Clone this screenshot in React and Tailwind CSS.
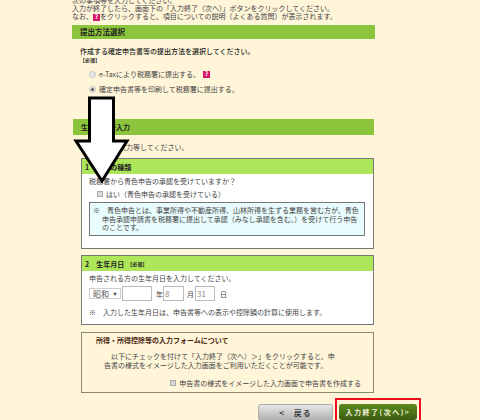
import React from 'react';

const jp = 'font-["Noto_Sans_CJK_JP",sans-serif]';

const Help = () => (
  <span className="inline-flex w-[7px] h-[7px] items-center justify-center bg-[#d6176b] text-white text-[6px] leading-none font-bold align-middle">?</span>
);

const Radio = ({ checked }) => (
  <span className="w-[7px] h-[7px] rounded-full border border-[#c4c4c4] bg-[#e8e8e8] flex items-center justify-center shrink-0">
    {checked && <span className="w-[3px] h-[3px] rounded-full bg-[#555]" />}
  </span>
);

const Check = () => (
  <span className="inline-block w-[6px] h-[6px] border border-[#aaa] bg-[#d8d8d8] shrink-0" />
);

const Box = ({ title, children, className = '' }) => (
  <div className={`w-[293px] ml-[10px] border border-[#777] bg-white ${className}`}>
    <div className="h-[15px] bg-[#aee65a] flex items-center pl-[3px] font-bold text-[#222]">{title}</div>
    {children}
  </div>
);

const Arrow = () => (
  <svg className="absolute left-[72px] top-[94px]" width="60" height="92" viewBox="0 0 60 92">
    <polygon points="17.5,4 41.5,4 41.5,47 55,47 30,87 4,47 17.5,47" fill="white" stroke="black" strokeWidth="3" />
  </svg>
);

export default function App() {
  return (
    <div className={`${jp} relative w-[480px] h-[420px] overflow-hidden bg-[#fff5d9] text-[#444] text-[7px] leading-[8px]`}>
      <div className="w-[305px] ml-[71px]">
        <div className="-mt-[4px] pl-[1px] h-[24px]">
          <p>次の事項等を入力してください。</p>
          <p>入力が終了したら、画面下の「入力終了（次へ）」ボタンをクリックしてください。</p>
          <p>なお、<Help />をクリックすると、項目についての説明（よくある質問）が表示されます。</p>
        </div>
        <div className="mt-[4px] h-[16px] bg-[#8cc43c] border border-[#fdf8dc] flex items-center pl-[8px] text-[7.5px] font-bold text-[#222]">提出方法選択</div>

        <p className="mt-[7px] pl-[9px] text-[#222] font-medium">作成する確定申告書等の提出方法を選択してください。</p>
        <p className="pl-[9px] text-[5px] leading-[9px] font-bold text-[#222]">【必須】</p>

        <div className="mt-[5px] pl-[18px] flex items-center gap-[3px] h-[10px]">
          <Radio />
          <span>e-Taxにより税務署に提出する。</span>
          <Help />
        </div>
        <div className="mt-[5px] pl-[18px] flex items-center gap-[3px] h-[10px]">
          <Radio checked />
          <span>確定申告書等を印刷して税務署に提出する。</span>
        </div>

        <div className="mt-[25px] ml-[2px] w-[301px] h-[16px] bg-[#8cc43c] flex items-center pl-[8px] font-bold text-[#222]">生年月日等入力</div>
        <p className="mt-[8px] pl-[13px]">次の項目を入力等してください。</p>

        <Box title="1　申告の種類" className="mt-[7px] h-[91px]">
          <p className="mt-[3px] pl-[7px]">税務署から青色申告の承認を受けていますか？</p>
          <div className="mt-[5px] pl-[15px] flex items-center gap-[3px]">
            <Check />
            <span>はい（青色申告の承認を受けている）</span>
          </div>
          <div className="mt-[4px] ml-[7px] w-[276px] h-[34px] border border-[#777] bg-[#e9fcfd] pl-[12px] pr-[4px] pt-[3px] leading-[8.5px]">
            <p className="-ml-[9px]">※　青色申告とは、事業所得や不動産所得、山林所得を生ずる業務を営む方が、青色</p>
            <p>申告承認申請書を税務署に提出して承認（みなし承認を含む。）を受けて行う申告</p>
            <p>のことです。</p>
          </div>
        </Box>

        <Box
          title={<>2　生年月日 <span className="ml-[3px] text-[5px]">【必須】</span></>}
          className="mt-[6px] h-[70px]"
        >
          <p className="mt-[3px] pl-[7px]">申告される方の生年月日を入力してください。</p>
          <div className="mt-[4px] pl-[7px] flex items-center h-[15px]">
            <span className="w-[32px] h-[11px] border border-[#ccc] bg-white flex items-center justify-between pl-[3px] pr-[3px] text-[8px] text-[#555]">
              昭和<span className="text-[4px]">▼</span>
            </span>
            <span className="ml-[1px] w-[30px] h-[15px] border border-[#bbb] bg-white" />
            <span className="ml-[4px] w-[7px]">年</span>
            <span className="w-[21px] h-[15px] border border-[#bbb] bg-white flex items-center pl-[1px] text-[#888] text-[8px]">8</span>
            <span className="ml-[3px] w-[8px]">月</span>
            <span className="w-[20px] h-[15px] border border-[#bbb] bg-white flex items-center pl-[1px] text-[#888] text-[8px]">31</span>
            <span className="ml-[5px]">日</span>
          </div>
          <p className="mt-[7px] pl-[7px]">※　入力した生年月日は、申告書等への表示や控除額の計算に使用します。</p>
        </Box>

        <div className="mt-[7px] ml-[10px] w-[293px] h-[61px] border-[1.5px] border-[#8a8a70] bg-[#fff5d9]">
          <p className="mt-[3px] pl-[14px] font-bold text-[#4a2410]">所得・所得控除等の入力フォームについて</p>
          <div className="mt-[8px] leading-[9px]">
            <p className="pl-[29px]">以下にチェックを付けて「入力終了（次へ）＞」をクリックすると、申</p>
            <p className="pl-[22px]">告書の様式をイメージした入力画面をご利用いただくことが可能です。</p>
          </div>
          <div className="mt-[9px] pr-[12px] flex items-center justify-end gap-[3px]">
            <Check />
            <span>申告書の様式をイメージした入力画面で申告書を作成する</span>
          </div>
        </div>
      </div>

      <div className="flex mt-[5px] ml-[258px]">
        <button className="mt-[6px] w-[75px] h-[17px] rounded-[3px] border border-[#aaa] bg-gradient-to-b from-[#e8e8e8] to-[#b0b0b0] text-[#444] text-[8px] font-bold tracking-[1px] whitespace-nowrap">
          &lt;　戻る
        </button>
        <div className="ml-[2px] w-[86px] h-[30px] border-2 border-[#e8101c] pt-[4px] pl-[2px]">
          <button className="w-[78px] h-[16px] rounded-[3px] bg-gradient-to-b from-[#5c8a1e] to-[#3c5c10] text-[#f2f2d8] text-[7px] font-bold tracking-[1.5px] whitespace-nowrap">
            入力終了(次へ)&gt;
          </button>
        </div>
      </div>

      <Arrow />
    </div>
  );
}
